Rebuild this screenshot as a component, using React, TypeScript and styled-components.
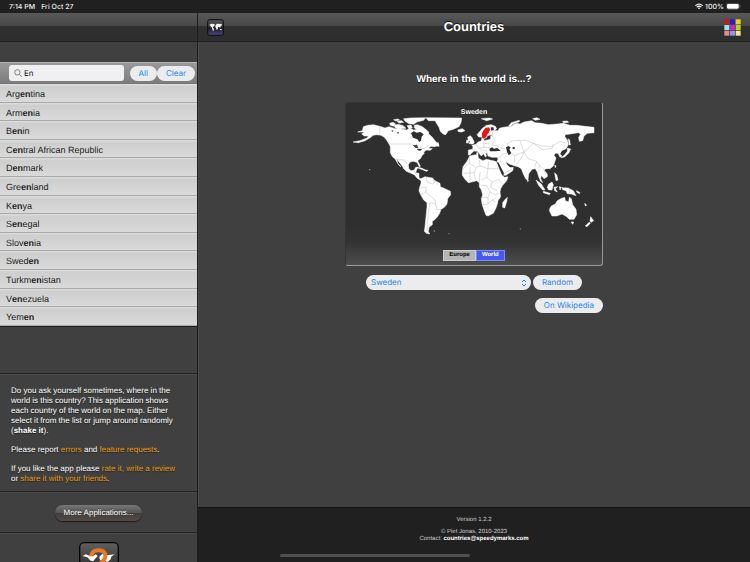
import React, { useState } from "react";
import styled, { createGlobalStyle, css } from "styled-components";

const GlobalStyle = createGlobalStyle`
  *, *::before, *::after { box-sizing: border-box; }
  body {
    margin: 0;
    background: #404040;
    color: #fff;
    font-family: "Liberation Sans", Arial, sans-serif;
    text-rendering: geometricPrecision;
  }
  button, input, select { font: inherit; margin: 0; text-rendering: inherit; }
`;

const Page = styled.div`
  display: flex;
  flex-direction: column;
  height: 100vh;
  overflow: hidden;
`;

const StatusBar = styled.div`
  display: flex;
  align-items: center;
  gap: 6px;
  flex: none;
  height: 13px;
  padding: 0 9px;
  background: #202020;
  color: #f0f0f0;
  font: 500 7px/13px Inter, sans-serif;
`;

const StatusSpacer = styled.span`
  flex: 1;
`;

const StatusIcons = styled.span`
  display: flex;
  align-items: center;
  gap: 2px;
`;

const Columns = styled.div`
  display: flex;
  flex: 1;
  min-height: 0;
`;

const Sidebar = styled.aside`
  display: flex;
  flex-direction: column;
  flex: none;
  width: 198px;
  overflow: hidden;
  border-right: 1px solid #1d1d1d;
`;

const barSurface = css`
  flex: none;
  height: 29px;
  background: linear-gradient(#595959, #484848 45%, #303030 46%, #2e2e2e);
  border-bottom: 1px solid #222;
`;

const SidebarBar = styled.div`
  ${barSurface}
`;

const SearchRow = styled.form`
  display: flex;
  align-items: center;
  flex: none;
  height: 22px;
  margin-top: 20px;
  padding: 0 2px 0 9px;
  border-top: 1px solid #b4b4b4;
  border-bottom: 1px solid #777;
  background: linear-gradient(#999, #7c7c7c);
`;

const SearchField = styled.label`
  display: flex;
  align-items: center;
  gap: 2px;
  flex: 1;
  min-width: 0;
  height: 16px;
  margin-right: 6px;
  padding: 0 5px;
  border-radius: 3px;
  background: #f0f0f2;
`;

const SearchInput = styled.input`
  flex: 1;
  min-width: 0;
  height: 16px;
  padding: 0;
  border: 0;
  outline: 0;
  background: none;
  color: #111;
  font: 8px/16px Inter, sans-serif;
`;

const Pill = styled.button`
  flex: none;
  height: 15px;
  padding: 0 9px;
  border: 0;
  border-radius: 8px;
  background: #ececee;
  color: #2484ee;
  font: 8px/15px Inter, sans-serif;
`;

const CountryList = styled.ul`
  flex: none;
  margin: 0;
  padding: 0;
  list-style: none;
  border-bottom: 1px solid #222;
`;

const CountryRow = styled.li`
  display: flex;
  height: calc(242px / 13);
  border-bottom: 1px solid #a9a9a9;
  background: linear-gradient(#dedede, #cecece 15%, #dadada);
`;

const CountryButton = styled.button`
  flex: 1;
  padding: 2px 6px 0;
  border: 0;
  background: none;
  color: #222;
  font-size: 9px;
  line-height: 16px;
  text-align: left;
`;

const Section = styled.section<{ $gap?: boolean }>`
  flex: none;
  margin-top: ${(p) => (p.$gap ? "46px" : "0")};
  border-top: 1px solid #232323;
  box-shadow: inset 0 1px #4a4a4a;
`;

const About = styled.div`
  padding: 12px 11px 7px;
  font-size: 8px;
  line-height: 10px;
  text-shadow: 0 1px 1px #222;
  white-space: nowrap;
`;

const Paragraph = styled.p`
  margin: 0 0 9px;
  &:last-child { margin-bottom: 0; }
`;

const TextLink = styled.a`
  color: #eb9b10;
  text-decoration: none;
`;

const MoreRow = styled.div`
  display: flex;
  justify-content: center;
  padding: 13px 0 11px;
`;

const MoreButton = styled.button`
  height: 16px;
  padding: 0 9px;
  border: 0;
  border-radius: 8px;
  background: linear-gradient(#777, #555 48%, #423e3c 52%, #554a46);
  box-shadow: 0 1px 1px #1a1a1a;
  color: #fff;
  font-size: 8px;
  line-height: 16px;
  text-shadow: 0 -1px 0 #333;
`;

const PromoRow = styled.div`
  display: flex;
  justify-content: center;
  padding-top: 9px;
`;

const Main = styled.main`
  display: flex;
  flex-direction: column;
  flex: 1;
  min-width: 0;
  box-shadow: inset 1px 0 #4b4b4b;
`;

const MainBar = styled.header`
  ${barSurface}
  display: grid;
  grid-template-columns: 1fr auto 1fr;
  align-items: center;
  padding: 0 9px;
`;

const Title = styled.h1`
  margin: 0;
  font-size: 13px;
  line-height: 16px;
  text-shadow: 0 -1px 1px #111;
`;

const IconButton = styled.button<{ $end?: boolean }>`
  display: flex;
  justify-self: ${(p) => (p.$end ? "end" : "start")};
  padding: 0;
  border: 0;
  background: none;
`;

const Content = styled.div`
  display: flex;
  flex-direction: column;
  align-items: center;
  flex: 1;
  padding-top: 31px;
`;

const Question = styled.h2`
  margin: 0 0 15px;
  font-size: 10px;
  line-height: 14px;
  text-shadow: 0 1px 1px #222;
`;

const Panel = styled.div`
  display: flex;
  flex-direction: column;
  width: 258px;
`;

const MapCard = styled.figure`
  display: grid;
  justify-items: center;
  margin: 0;
  height: 164px;
  border: 1px solid #333;
  border-right-color: #999;
  border-bottom-color: #999;
  border-radius: 3px;
  background: linear-gradient(#2f2f2f 75%, #333 86%, #4d4d4d);

  > * { grid-area: 1 / 1; }
`;

const MapDrawing = styled.svg`
  display: block;
  width: 100%;
  height: 100%;
`;

const MapCaption = styled.figcaption`
  z-index: 1;
  padding-top: 5px;
  font-size: 7px;
  font-weight: bold;
  line-height: 9px;
`;

const ZoomSwitch = styled.div`
  display: flex;
  align-self: end;
  z-index: 1;
  margin-bottom: 4px;
`;

const ZoomButton = styled.button<{ $on: boolean }>`
  height: 11px;
  padding: 0 5px;
  border: 1px solid ${(p) => (p.$on ? "#7d8cf5" : "#ccc")};
  background: ${(p) => (p.$on ? "#4658ee" : "#b5b5b5")};
  color: ${(p) => (p.$on ? "#fff" : "#000")};
  font-size: 6px;
  font-weight: bold;
  line-height: 9px;
`;

const Controls = styled.div`
  display: flex;
  gap: 2px;
  margin: 9px 21px 8px;
`;

const SelectShell = styled.label`
  display: flex;
  align-items: center;
  flex: 1;
  min-width: 0;
  height: 15px;
  padding-right: 4px;
  border-radius: 8px;
  background: #ececee;
`;

const CountrySelect = styled.select`
  appearance: none;
  flex: 1;
  min-width: 0;
  height: 15px;
  padding: 0 5px;
  border: 0;
  outline: 0;
  background: none;
  color: #2484ee;
  font: 8px/15px Inter, sans-serif;
`;

const LinkRow = styled.div`
  display: flex;
  justify-content: flex-end;
`;

const Footer = styled.footer`
  display: flex;
  flex-direction: column;
  flex: none;
  height: 55px;
  padding: 9px 0 5px;
  border-top: 1px solid #111;
  background: #202020;
  color: #ccc;
  font-size: 6px;
  line-height: 7px;
  text-align: center;
`;

const FooterLine = styled.p<{ $space?: boolean }>`
  margin: 0 0 ${(p) => (p.$space ? "5px" : "0")};
`;

const MailLink = styled.a`
  color: #fff;
  font-weight: bold;
  text-decoration: none;
`;

const HomeIndicator = styled.div`
  width: 190px;
  height: 3px;
  margin: auto 0 0 82px;
  border-radius: 2px;
  background: #505050;
`;

const COUNTRIES = [
  "Argentina",
  "Armenia",
  "Benin",
  "Central African Republic",
  "Denmark",
  "Greenland",
  "Kenya",
  "Senegal",
  "Slovenia",
  "Sweden",
  "Turkmenistan",
  "Venezuela",
  "Yemen",
];

const WEST_LAND = [
  "M52 92L55 80 68 76 85 74 104 79 120 84 132 80 150 86 165 86 185 90 195 84 206 90 218 88 230 92 236 90 246 96 254 104 262 112 270 122 282 136 268 140 258 139 250 144 262 146 255 151 245 150 236 156 238 160 230 168 228 174 218 182 226 198 223 201 216 187 205 184 195 186 190 194 192 208 200 212 208 210 212 202 218 202 214 212 212 218 222 220 222 234 232 238 228 242 216 234 208 224 198 220 184 214 176 206 172 198 160 184 155 176 158 190 168 200 164 198 154 184 150 176 142 170 136 158 136 140 132 132 126 122 118 112 108 106 95 104 84 106 78 112 60 122 40 128 24 126 45 122 66 114 70 108 58 108 50 102 58 96 38 96Z",
  "M243 53L350 54 348 68 342 80 325 88 310 92 302 104 294 102 286 94 282 82 276 72 270 62 250 62Z",
  "M176 56L196 54 242 53 236 61 216 66 206 73 192 71 180 63Z",
  "M208 76L218 74 232 80 242 88 252 97 246 105 232 97 218 91 208 84Z",
  "M148 76L160 73 174 77 183 85 160 87 150 83Z",
  "M134 70L144 67 152 72 146 79 136 76Z",
  "M156 64L170 62 176 67 162 69Z",
  "M146 59L158 57 164 60 152 63Z",
  "M186 77L198 75 202 83 192 86Z",
  "M264 129L280 128 282 139 270 137Z",
  "M338 90L352 86 360 92 350 96 340 95Z",
  "M214 202L226 203 238 208 238 211 226 207Z M238 209L249 211 246 214 238 212Z",
  "M228 236L240 230 262 234 270 242 285 250 286 260 300 266 316 274 317 284 308 296 306 312 298 322 288 328 284 340 276 352 268 360 262 364 262 374 252 382 250 394 254 402 244 400 238 394 240 380 242 360 244 340 246 320 246 308 236 300 226 282 222 272 224 262 228 250Z",
  "M370 122L368 112 376 107 382 114 388 127 384 132 372 131 376 124Z M365 120L371 122 370 129 364 129Z",
];

const EAST_LAND = [
  "M-23 216L-21 200-9 184-1 168 12 165 24 164 25 174 38 182 50 178 76 184 82 190 90 212 98 228 104 232 114 230 110 242 98 256 92 266 90 276 92 290 84 302 82 312 78 324 70 340 54 348 48 346 42 330 36 312 34 296 38 284 34 270 28 260 28 248 20 242 5 246-5 248-15 238-23 226Z",
  "M112 292L110 306 104 324 98 322 98 308 104 300Z",
  "M-5 165L-5 150 8 148 9 140 5 136 18 133 24 126 34 123 36 113 42 114 42 122 56 119 62 116 62 108 72 106 60 105 52 107 50 113 40 116 34 111 26 111 21 104 28 96 38 84 50 76 64 74 76 79 80 86 72 92 84 92 88 85 100 82 112 80 122 80 130 74 140 70 150 72 162 66 185 62 195 68 215 70 235 74 262 72 280 70 300 76 320 76 345 79 372 82 372 98 352 100 342 108 338 122 328 124 326 112 332 102 325 98 300 102 285 104 285 110 292 120 295 134 288 146 275 152 270 162 276 168 270 172 264 160 256 160 252 166 258 174 254 186 250 198 240 206 228 206 222 210 232 222 232 230 222 236 214 226 212 236 218 248 212 244 206 230 202 216 196 206 186 208 176 222 174 240 168 238 160 222 154 206 144 200 128 196 116 192 120 200 130 202 128 212 108 226 98 226 90 206 80 186 84 178 82 172 66 172 54 168 52 160 46 160 50 168 46 171 40 160 30 150 40 162 34 168 22 154 12 153 4 160 0 165Z",
  "M240 324L238 332 246 348 260 348 276 342 290 350 298 358 312 358 320 344 318 328 308 314 304 296 298 292 296 306 286 302 284 292 272 296 262 302 256 312 244 318Z",
  "M303 366L311 366 308 373Z",
  "M362 350L371 362 363 367 360 363Z M358 366L361 370 351 380 346 378Z",
  "M198 240L214 252 225 270 218 270 206 256Z",
  "M220 274L241 280 238 284 220 278Z",
  "M232 262L236 252 246 246 250 254 246 270 236 270Z",
  "M252 262L263 260 256 266 262 276 254 272Z",
  "M268 260L274 262 270 270Z",
  "M276 263L294 264 310 272 318 287 304 282 292 281 288 272 278 269Z",
  "M254 218L260 224 264 240 258 242 256 232Z",
  "M254 196L258 197 256 203Z M172 238L176 242 173 245Z",
  "M292 144L302 147 297 158 284 171 273 173 284 164 292 154Z",
  "M295 116L299 120 301 135 297 134Z",
  "M116 78L124 68 148 61 148 65 128 72 121 80Z",
  "M34 56L58 54 68 57 50 62Z",
  "M188 56L200 53 210 58 196 61Z M278 64L292 63 296 67 280 68Z",
  "M320 272L330 278 328 281 320 276Z M344 310L350 316 346 318Z",
  "M20 158L24 158 24 165 20 164Z",
];

const WEST_WATER = [
  "M198 100L206 94 216 98 226 96 236 103 230 110 228 122 223 126 217 118 204 113Z",
  "M203 136L216 134 220 143 212 144Z M216 146L232 147 226 152 218 151Z",
  "M154 98L162 96 160 101Z M138 92L146 91 143 95Z",
];

const EAST_WATER = [
  "M58 146L66 142 72 146 82 144 92 152 76 154 60 154Z",
  "M108 142L116 138 122 142 118 148 124 160 116 166 111 156Z",
  "M128 142L134 140 134 148 128 147Z",
  "M62 82L70 82 72 90 64 92Z",
  "M80 186L85 187 102 220 100 228 96 224Z",
  "M108 186L120 194 130 198 128 202 120 202 112 194Z",
];

const WEST_BORDERS =
  "M104 79V105M134 132H200L218 140 236 146 250 138M154 178L178 180 190 194M208 212L214 224M244 232L246 246 262 252 272 244M226 264L244 262 242 276 228 284M242 276L258 290 270 300 272 314 262 308 250 310M272 314L276 330 288 328M254 310L250 340 246 394M264 232L268 250M276 244L276 254";

const EAST_BORDERS =
  "M-20 206L-2 190-1 172M-2 190L18 202 30 198 28 180M30 198L54 206 56 184M54 206H86M0 202V240M18 202L12 220 16 240M-18 220L12 218M30 216L28 246M54 206L50 232 34 240M50 232L66 246 86 238 98 254M66 246L62 262 82 272M34 258L50 256 60 276 54 292 36 292M60 276L76 284 88 280M54 292V312L38 314M54 312L66 300 76 306M66 300L80 292M80 188L92 184 104 196M98 224L126 206M84 176L98 162 112 160M124 160L134 166 134 190M134 166L150 160 162 156 154 174 140 192M162 156L174 176 200 184 194 202M162 156L178 142 190 130 166 120 130 122 112 130 114 140M190 130L216 138 246 140 270 124 290 130M190 130L216 148 246 146 250 132M200 184L208 196 206 214M208 196L220 206 228 224M70 92L66 106 74 122 66 134 82 138 104 146M8 148L14 152M18 134L26 144 42 142 40 124M42 142L60 142M26 144L36 150 50 152 50 160M42 130L60 132M150 122L162 156M298 264V280";

function WorldMap() {
  return (
    <MapDrawing viewBox="3 9 768 486" role="img" aria-label="World map with Sweden in red">
      <g fill="#fff" stroke="#fff" strokeWidth="1.5">
        {WEST_LAND.map((d) => (
          <path key={d} d={d} />
        ))}
      </g>
      <circle cx="74" cy="209" r="2" fill="#aaa" />
      <circle cx="268" cy="393" r="2" fill="#aaa" />
      <circle cx="312" cy="401" r="2" fill="#888" />
      <g fill="#2f2f2f">
        {WEST_WATER.map((d) => (
          <path key={d} d={d} />
        ))}
      </g>
      <path d={WEST_BORDERS} fill="none" stroke="#aaa" strokeWidth="1.2" />
      <g transform="translate(375 0)">
        <g fill="#fff" stroke="#fff" strokeWidth="1.5">
          {EAST_LAND.map((d) => (
            <path key={d} d={d} />
          ))}
        </g>
        <circle cx="151" cy="387" r="2" fill="#888" />
        <g fill="#2f2f2f">
          {EAST_WATER.map((d) => (
            <path key={d} d={d} />
          ))}
        </g>
        <path d={EAST_BORDERS} fill="none" stroke="#aaa" strokeWidth="1.2" />
        <path
          d="M46 84L56 82 61 88 56 98 51 104 49 112 40 116 36 112 36 100 40 92Z"
          fill="#f01212"
        />
      </g>
    </MapDrawing>
  );
}

function AppIcon() {
  return (
    <svg width="17" height="17" viewBox="0 0 51 51" aria-hidden="true">
      <defs>
        <linearGradient id="appFace" x2="0" y2="1">
          <stop stopColor="#555" />
          <stop offset=".48" stopColor="#333" />
          <stop offset=".52" stopColor="#1c1c22" />
          <stop offset="1" stopColor="#4c468c" />
        </linearGradient>
      </defs>
      <rect x="2" y="2" width="47" height="47" rx="6" fill="url(#appFace)" stroke="#0c0c0c" strokeWidth="3" />
      <path
        d="M7 17L13 14 21 15 24 18 19 23 17 26 20 28 21 32 18 37 16 31 14 25 10 21ZM26 18L30 14 44 15 45 19 41 21 40 26 37 25 34 23 32 31 29 33 27 27 25 24ZM39 30L44 30 44 34 39 33Z"
        fill="#f4f4f4"
      />
    </svg>
  );
}

const SWATCHES = [
  "#d71313", "#1525d0", "#f3cf20",
  "#8cebf0", "#dd17c7", "#a4df14",
  "#f08a80", "#8c96ee", "#f2ec88",
];

function GridIcon() {
  return (
    <svg width="17" height="17" viewBox="0 0 51 51" aria-hidden="true">
      {SWATCHES.map((color, i) => (
        <rect
          key={color}
          x={1 + (i % 3) * 17}
          y={1 + Math.floor(i / 3) * 17}
          width="15"
          height="15"
          fill={color}
        />
      ))}
    </svg>
  );
}

function SearchIcon() {
  return (
    <svg width="8" height="8" viewBox="0 0 24 24" fill="none" stroke="#666" strokeWidth="2.4" aria-hidden="true">
      <circle cx="10" cy="10" r="8" />
      <path d="M16 16l7 7" />
    </svg>
  );
}

function WifiIcon() {
  return (
    <svg width="8" height="7" viewBox="0 0 24 18" fill="none" stroke="#fff" strokeWidth="3.2" aria-hidden="true">
      <path d="M1 6.500Q12-2.500 23 6.500M5 11Q12 5 19 11" />
      <path d="M8.500 13.500Q12 10.500 15.500 13.500L12 17.500Z" fill="#fff" stroke="none" />
    </svg>
  );
}

function BatteryIcon() {
  return (
    <svg width="15" height="7" viewBox="0 0 45 21" aria-hidden="true">
      <rect x="1" y="1" width="39" height="18" rx="6" fill="none" stroke="#888" strokeWidth="1.500" />
      <rect x="3" y="3" width="35" height="14" rx="4" fill="#fff" />
      <path d="M42 7q3 3 0 6z" fill="#999" />
    </svg>
  );
}

function ChevronsIcon() {
  return (
    <svg width="6" height="8" viewBox="0 0 18 24" fill="none" stroke="#2484ee" strokeWidth="3" aria-hidden="true">
      <path d="M3 9l6-6 6 6M3 15l6 6 6-6" />
    </svg>
  );
}

function PromoIcon() {
  return (
    <svg width="40" height="40" viewBox="0 0 120 120" aria-hidden="true">
      <defs>
        <linearGradient id="promoFace" x2="0" y2="1">
          <stop stopColor="#606060" />
          <stop offset=".5" stopColor="#3c3c3c" />
        </linearGradient>
      </defs>
      <rect x="2" y="2" width="116" height="116" rx="14" fill="url(#promoFace)" stroke="#050505" strokeWidth="4" />
      <path
        d="M11 42L20 37 31 41 43 42 50 37 56 42 47 52 43 58 35 56 25 46ZM61 44L70 36 84 40 107 37 98 43 94 53 85 60 77 56 69 60 62 52Z"
        fill="#fff"
      />
      <path
        d="M37 43Q38 25 58 25Q79 25 79 42Q79 54 66 62L64 76"
        fill="none"
        stroke="#e97828"
        strokeWidth="12"
      />
    </svg>
  );
}

function Highlighted({ name, term }: { name: string; term: string }) {
  const at = term ? name.toLowerCase().indexOf(term.toLowerCase()) : -1;
  if (at < 0) return <>{name}</>;
  return (
    <>
      {name.slice(0, at)}
      <b>{name.slice(at, at + term.length)}</b>
      {name.slice(at + term.length)}
    </>
  );
}

export default function App() {
  const [term, setTerm] = useState("En");
  const [country, setCountry] = useState("Sweden");
  const [area, setArea] = useState("World");
  const visible = COUNTRIES.filter((c) => c.toLowerCase().includes(term.toLowerCase()));

  return (
    <>
      <GlobalStyle />
      <Page>
        <StatusBar>
          <span>7:14 PM</span>
          <span>Fri Oct 27</span>
          <StatusSpacer />
          <StatusIcons>
            <WifiIcon />
            100%
            <BatteryIcon />
          </StatusIcons>
        </StatusBar>
        <Columns>
          <Sidebar>
            <SidebarBar />
            <SearchRow onSubmit={(e) => e.preventDefault()}>
              <SearchField>
                <SearchIcon />
                <SearchInput
                  aria-label="Search countries"
                  value={term}
                  onChange={(e) => setTerm(e.target.value)}
                />
              </SearchField>
              <Pill type="button" onClick={() => setTerm("")}>All</Pill>
              <Pill type="button" onClick={() => setTerm("")}>Clear</Pill>
            </SearchRow>
            <CountryList>
              {visible.map((name) => (
                <CountryRow key={name}>
                  <CountryButton type="button" onClick={() => setCountry(name)}>
                    <Highlighted name={name} term={term} />
                  </CountryButton>
                </CountryRow>
              ))}
            </CountryList>
            <Section $gap>
              <About>
                <Paragraph>
                  Do you ask yourself sometimes, where in the<br />
                  world is this country? This application shows<br />
                  each country of the world on the map. Either<br />
                  select it from the list or jump around randomly<br />
                  (<b>shake it</b>).
                </Paragraph>
                <Paragraph>
                  Please report <TextLink href="#errors">errors</TextLink> and{" "}
                  <TextLink href="#features">feature requests</TextLink>.
                </Paragraph>
                <Paragraph>
                  If you like the app please <TextLink href="#rate">rate it, write a review</TextLink>
                  <br />
                  or <TextLink href="#share">share it with your friends</TextLink>.
                </Paragraph>
              </About>
            </Section>
            <Section>
              <MoreRow>
                <MoreButton type="button">More Applications...</MoreButton>
              </MoreRow>
            </Section>
            <Section>
              <PromoRow>
                <PromoIcon />
              </PromoRow>
            </Section>
          </Sidebar>
          <Main>
            <MainBar>
              <IconButton type="button" aria-label="Home">
                <AppIcon />
              </IconButton>
              <Title>Countries</Title>
              <IconButton type="button" aria-label="Themes" $end>
                <GridIcon />
              </IconButton>
            </MainBar>
            <Content>
              <Question>Where in the world is...?</Question>
              <Panel>
                <MapCard>
                  <WorldMap />
                  <MapCaption>{country}</MapCaption>
                  <ZoomSwitch>
                    {["Europe", "World"].map((name) => (
                      <ZoomButton
                        key={name}
                        type="button"
                        $on={area === name}
                        onClick={() => setArea(name)}
                      >
                        {name}
                      </ZoomButton>
                    ))}
                  </ZoomSwitch>
                </MapCard>
                <Controls>
                  <SelectShell>
                    <CountrySelect
                      aria-label="Country"
                      value={country}
                      onChange={(e) => setCountry(e.target.value)}
                    >
                      {COUNTRIES.map((name) => (
                        <option key={name}>{name}</option>
                      ))}
                    </CountrySelect>
                    <ChevronsIcon />
                  </SelectShell>
                  <Pill type="button">Random</Pill>
                </Controls>
                <LinkRow>
                  <Pill type="button">On Wikipedia</Pill>
                </LinkRow>
              </Panel>
            </Content>
            <Footer>
              <FooterLine $space>Version 1.2.2</FooterLine>
              <FooterLine>© Piet Jonas, 2010-2023</FooterLine>
              <FooterLine>
                Contact: <MailLink href="mailto:countries@speedymarks.com">countries@speedymarks.com</MailLink>
              </FooterLine>
              <HomeIndicator />
            </Footer>
          </Main>
        </Columns>
      </Page>
    </>
  );
}
